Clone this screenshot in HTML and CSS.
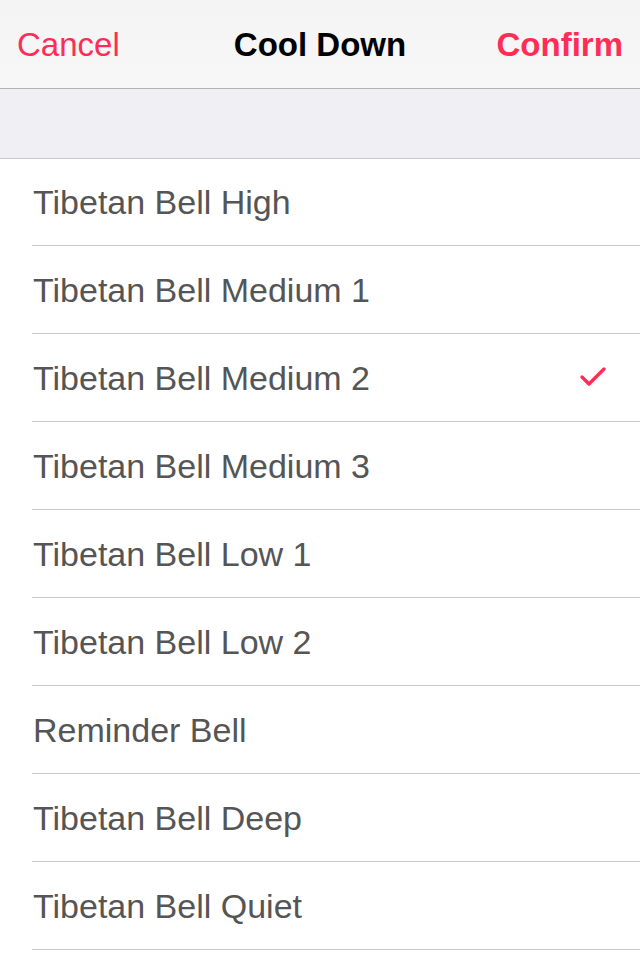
FILE: index.html
```html
<!DOCTYPE html>
<html lang="en">
<head>
    <meta charset="UTF-8">
    <meta name="viewport" content="width=device-width, initial-scale=1.0">
    <title>Cool Down</title>
    <link rel="stylesheet" href="styles.css">
</head>
<body>

    <!-- Top bar -->
    <div class="navbar">
        <a href="#" class="nav-btn cancel">Cancel</a>
        <h1 class="nav-title">Cool Down</h1>
        <a href="#" class="nav-btn confirm">Confirm</a>
    </div>

    <!-- Grey spacer band -->
    <div class="band"></div>

    <!-- Sound list -->
    <ul class="sound-list">
        <li>Tibetan Bell High</li>
        <li>Tibetan Bell Medium 1</li>
        <li class="selected">Tibetan Bell Medium 2
            <svg class="check" width="28" height="22" viewBox="0 0 28 22">
                <path d="M3 11 L10 18 L25 3" fill="none" stroke="#ff2d55" stroke-width="3.4" stroke-linecap="round" stroke-linejoin="round"/>
            </svg>
        </li>
        <li>Tibetan Bell Medium 3</li>
        <li>Tibetan Bell Low 1</li>
        <li>Tibetan Bell Low 2</li>
        <li>Reminder Bell</li>
        <li>Tibetan Bell Deep</li>
        <li>Tibetan Bell Quiet</li>
    </ul>

</body>
</html>
```

FILE: styles.css
```css
* {
    margin: 0;
    padding: 0;
    box-sizing: border-box;
}
body {
    font-family: "Liberation Sans", Arial, sans-serif;
    background: white;
    width: 640px;
    height: 960px;
    overflow: hidden;
}
/* Navigation bar */
.navbar {
    height: 89px;
    display: grid;
    grid-template-columns: 1fr auto 1fr;
    align-items: center;
    padding: 2px 17px 0 17px;
    background: linear-gradient(#f4f4f5, #f7f7f7);
    border-bottom: 1px solid #b2b2b2;
}
.nav-btn {
    font-size: 33px;
    color: #ff2d55;
    text-decoration: none;
}
.cancel {
    justify-self: start;
}
.confirm {
    justify-self: end;
    font-weight: bold;
}
.nav-title {
    font-size: 33px;
    font-weight: bold;
    color: #000;
}
.band {
    height: 70px;
    background: #efeff4;
    border-bottom: 1px solid #c8c7cc;
}
/* List */
.sound-list {
    list-style: none;
    margin-left: 32px;
}
.sound-list li {
    height: 88px;
    display: flex;
    align-items: center;
    justify-content: space-between;
    padding: 1px 33px 0 1px;
    font-size: 34px;
    color: #555;
    border-bottom: 1px solid #c8c7cc;
}
.sound-list li:first-child {
    height: 87px;
}
.check {
    margin-top: -2px;
}
```
